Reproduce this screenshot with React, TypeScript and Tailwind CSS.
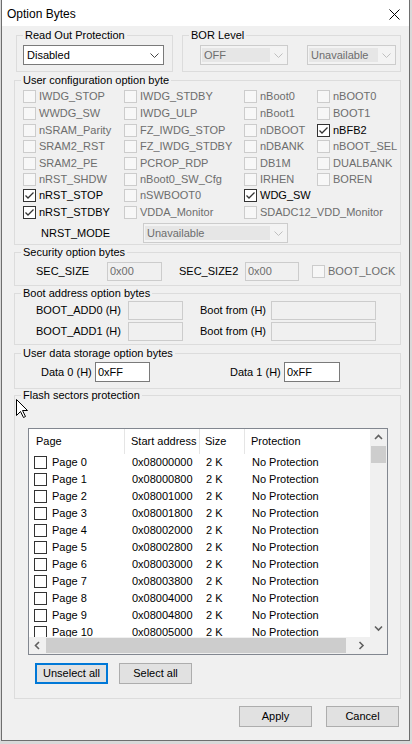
import React from "react";

type Item = { t: string; c?: boolean; e?: boolean } | null;

const Chk = ({ checked = false, disabled = false }: { checked?: boolean; disabled?: boolean }) => (
  <span
    className={`flex w-[13px] h-[13px] shrink-0 items-center justify-center border ${
      disabled ? "border-[#cccccc] bg-[#f7f7f7]" : "border-[#333333] bg-white"
    }`}
  >
    {checked && (
      <svg width="11" height="11" viewBox="0 0 11 11">
        <polyline points="1.5,5.5 4,8 9.5,2.5" fill="none" stroke="#333333" strokeWidth="1.3" />
      </svg>
    )}
  </span>
);

const Chevron = ({ color }: { color: string }) => (
  <svg width="9" height="5" viewBox="0 0 9 5">
    <polyline points="0.5,0.5 4.5,4.5 8.5,0.5" fill="none" stroke={color} strokeWidth="1" />
  </svg>
);

const ArrowIcon = ({ dir }: { dir: "up" | "down" | "left" | "right" }) => {
  const pts: Record<string, string> = {
    up: "1,6 4.5,2.5 8,6",
    down: "1,2.5 4.5,6 8,2.5",
    left: "6,1 2.5,4.5 6,8",
    right: "2.5,1 6,4.5 2.5,8",
  };
  return (
    <svg width="9" height="9" viewBox="0 0 9 9">
      <polyline points={pts[dir]} fill="none" stroke="#606060" strokeWidth="1.6" />
    </svg>
  );
};

const Group = ({
  label,
  className = "",
  children,
}: {
  label: string;
  className?: string;
  children?: React.ReactNode;
}) => (
  <div className={`flex flex-col border border-[#dcdcdc] ${className}`}>
    <span className="self-start ml-[6px] -mt-[7px] -mb-[6px] px-[2px] h-[13px] leading-[13px] bg-[#f0f0f0] whitespace-nowrap">
      {label}
    </span>
    {children}
  </div>
);

const DisabledSelect = ({ value, className }: { value: string; className: string }) => (
  <div className={`flex h-[20px] border border-[#cccccc] bg-[#f3f3f3] ${className}`}>
    <div className="flex-1 my-[2px] ml-[1px] bg-[#e6e6e6] flex items-center pl-[2px] text-[#6d6d6d]">{value}</div>
    <div className="w-[17px] flex items-center justify-center">
      <Chevron color="#bfbfbf" />
    </div>
  </div>
);

const DisabledInput = ({ value = "", className }: { value?: string; className: string }) => (
  <div className={`h-[19px] border border-[#cccccc] bg-[#f0f0f0] flex items-center pl-[2px] text-[#6d6d6d] ${className}`}>
    {value}
  </div>
);

const WhiteInput = ({ value, className }: { value: string; className: string }) => (
  <div className={`h-[20px] border border-[#7a7a7a] bg-white flex items-center pl-[2px] ${className}`}>{value}</div>
);

const Btn = ({ label, focus = false, className = "" }: { label: string; focus?: boolean; className?: string }) => (
  <div
    className={`w-[73px] h-[21px] flex items-center justify-center bg-[#e1e1e1] ${
      focus ? "border-2 border-[#0078d7]" : "border border-[#adadad]"
    } ${className}`}
  >
    {label}
  </div>
);

const rows: { h: string; items: Item[] }[] = [
  { h: "h-[17px]", items: [{ t: "IWDG_STOP" }, { t: "IWDG_STDBY" }, { t: "nBoot0" }, { t: "nBOOT0" }] },
  { h: "h-[17px]", items: [{ t: "WWDG_SW" }, { t: "IWDG_ULP" }, { t: "nBoot1" }, { t: "BOOT1" }] },
  { h: "h-[16px]", items: [{ t: "nSRAM_Parity" }, { t: "FZ_IWDG_STOP" }, { t: "nDBOOT" }, { t: "nBFB2", c: true, e: true }] },
  { h: "h-[17px]", items: [{ t: "SRAM2_RST" }, { t: "FZ_IWDG_STDBY" }, { t: "nDBANK" }, { t: "nBOOT_SEL" }] },
  { h: "h-[16px]", items: [{ t: "SRAM2_PE" }, { t: "PCROP_RDP" }, { t: "DB1M" }, { t: "DUALBANK" }] },
  { h: "h-[16px]", items: [{ t: "nRST_SHDW" }, { t: "nBoot0_SW_Cfg" }, { t: "IRHEN" }, { t: "BOREN" }] },
  { h: "h-[17px]", items: [{ t: "nRST_STOP", c: true, e: true }, { t: "nSWBOOT0" }, { t: "WDG_SW", c: true, e: true }, null] },
  { h: "h-[17px]", items: [{ t: "nRST_STDBY", c: true, e: true }, { t: "VDDA_Monitor" }, { t: "SDADC12_VDD_Monitor" }, null] },
];

const colW = ["w-[101px]", "w-[120px]", "w-[73px]", "flex-1"];

const CheckItem = ({ item }: { item: Item }) => {
  if (!item) return null;
  return (
    <div className="flex items-center gap-[3px] whitespace-nowrap">
      <Chk checked={item.c} disabled={!item.e} />
      <span className={item.e ? "text-black" : "text-[#6d6d6d]"}>{item.t}</span>
    </div>
  );
};

const pages = Array.from({ length: 11 }, (_, i) => ({
  name: `Page ${i}`,
  addr: "0x" + (0x08000000 + i * 0x800).toString(16).toUpperCase().padStart(8, "0"),
}));

export default function App() {
  return (
    <div className="relative w-[412px] h-[744px] overflow-hidden bg-[#d9d9d9] font-['Liberation_Sans',Arial,sans-serif] text-[11px] leading-[13px] text-black">
      <div className="ml-[1px] w-[409px] h-[741px] flex flex-col bg-[#f0f0f0] border-x border-b border-[#6e6e6e]">
        {/* Title bar */}
        <div className="h-[26px] shrink-0 bg-white flex items-center pt-[2px]">
          <span className="ml-[5px] text-[12px] leading-[15px]">Option Bytes</span>
          <div className="ml-auto mr-[9px] flex items-center">
            <svg width="11" height="11" viewBox="0 0 11 11">
              <path d="M0.5 0.5 L10.5 10.5 M10.5 0.5 L0.5 10.5" stroke="#000" strokeWidth="1" fill="none" />
            </svg>
          </div>
        </div>

        {/* Row: Read out / BOR */}
        <div className="flex mt-[9px] ml-[14px] gap-[9px]">
          <Group label="Read Out Protection" className="w-[157px] h-[37px]">
            <div className="mt-[9px] ml-[6px] w-[141px] h-[20px] border border-[#7a7a7a] bg-white flex">
              <div className="flex-1 flex items-center pl-[3px]">Disabled</div>
              <div className="w-[17px] flex items-center justify-center">
                <Chevron color="#444444" />
              </div>
            </div>
          </Group>
          <Group label="BOR Level" className="w-[219px] h-[37px]">
            <div className="mt-[9px] flex">
              <DisabledSelect value="OFF" className="ml-[17px] w-[88px]" />
              <DisabledSelect value="Unavailable" className="ml-[19px] w-[89px]" />
            </div>
          </Group>
        </div>

        {/* User configuration */}
        <Group label="User configuration option byte" className="ml-[12px] mt-[8px] w-[387px] h-[165px]">
          <div className="mt-[7px] pl-[8px] flex flex-col">
            {rows.map((r, ri) => (
              <div key={ri} className={`flex items-center ${r.h}`}>
                {r.items.map((it, ci) => (
                  <div key={ci} className={colW[ci]}>
                    <CheckItem item={it} />
                  </div>
                ))}
              </div>
            ))}
          </div>
          <div className="flex items-center mt-[2px] h-[20px]">
            <span className="ml-[26px] w-[102px]">NRST_MODE</span>
            <DisabledSelect value="Unavailable" className="w-[145px]" />
          </div>
        </Group>

        {/* Security */}
        <Group label="Security option bytes" className="ml-[12px] mt-[7px] w-[387px] h-[34px]">
          <div className="mt-[9px] h-[19px] flex items-center">
            <span className="ml-[21px] w-[71px]">SEC_SIZE</span>
            <DisabledInput value="0x00" className="w-[55px]" />
            <span className="ml-[17px] w-[66px]">SEC_SIZE2</span>
            <DisabledInput value="0x00" className="w-[54px]" />
            <div className="ml-[13px] flex items-center gap-[3px]">
              <Chk disabled />
              <span className="text-[#6d6d6d]">BOOT_LOCK</span>
            </div>
          </div>
        </Group>

        {/* Boot address */}
        <Group label="Boot address option bytes" className="ml-[12px] mt-[7px] w-[387px] h-[52px]">
          <div className="mt-[7px] h-[19px] flex items-center">
            <span className="ml-[21px] w-[92px]">BOOT_ADD0 (H)</span>
            <DisabledInput className="w-[55px]" />
            <span className="ml-[17px] w-[71px]">Boot from (H)</span>
            <DisabledInput className="w-[105px]" />
          </div>
          <div className="mt-[2px] h-[19px] flex items-center">
            <span className="ml-[21px] w-[92px]">BOOT_ADD1 (H)</span>
            <DisabledInput className="w-[55px]" />
            <span className="ml-[17px] w-[71px]">Boot from (H)</span>
            <DisabledInput className="w-[105px]" />
          </div>
        </Group>

        {/* User data */}
        <Group label="User data storage option bytes" className="ml-[12px] mt-[8px] w-[387px] h-[36px]">
          <div className="mt-[8px] h-[20px] flex items-center">
            <span className="ml-[26px] w-[54px]">Data 0 (H)</span>
            <WhiteInput value="0xFF" className="w-[55px]" />
            <span className="ml-[80px] w-[54px]">Data 1 (H)</span>
            <WhiteInput value="0xFF" className="w-[56px]" />
          </div>
        </Group>

        {/* Flash sectors */}
        <Group label="Flash sectors protection" className="ml-[12px] mt-[6px] w-[387px] h-[304px]">
          <div className="mt-[32px] ml-[13px] w-[360px] h-[227px] border border-[#828790] bg-white flex flex-col">
            <div className="h-[208px] flex">
              <div className="w-[341px] flex flex-col overflow-hidden">
                <div className="h-[25px] shrink-0 flex">
                  <div className="w-[96px] pl-[7px] flex items-center border-r border-[#e5e5e5]">Page</div>
                  <div className="w-[75px] pl-[6px] flex items-center border-r border-[#e5e5e5] whitespace-nowrap">
                    Start address
                  </div>
                  <div className="w-[45px] pl-[5px] flex items-center border-r border-[#e5e5e5]">Size</div>
                  <div className="flex-1 pl-[6px] flex items-center">Protection</div>
                </div>
                <div className="flex-1 overflow-hidden">
                  {pages.map((p) => (
                    <div key={p.name} className="h-[17px] flex items-center whitespace-nowrap">
                      <div className="w-[96px] pl-[5px] flex items-center gap-[5px]">
                        <Chk />
                        <span>{p.name}</span>
                      </div>
                      <div className="w-[75px] pl-[7px]">{p.addr.replace("0X", "0x")}</div>
                      <div className="w-[45px] pl-[6px]">2 K</div>
                      <div className="flex-1 pl-[7px]">No Protection</div>
                    </div>
                  ))}
                </div>
              </div>
              <div className="w-[17px] bg-[#f0f0f0] flex flex-col">
                <div className="h-[17px] flex items-center justify-center">
                  <ArrowIcon dir="up" />
                </div>
                <div className="h-[17px] mx-[1px] bg-[#cdcdcd]" />
                <div className="flex-1" />
                <div className="h-[17px] flex items-center justify-center">
                  <ArrowIcon dir="down" />
                </div>
              </div>
            </div>
            <div className="h-[17px] flex">
              <div className="w-[341px] bg-[#f0f0f0] flex">
                <div className="w-[17px] flex items-center justify-center">
                  <ArrowIcon dir="left" />
                </div>
                <div className="w-[300px] my-[1px] bg-[#cdcdcd]" />
                <div className="flex-1" />
                <div className="w-[17px] flex items-center justify-center">
                  <ArrowIcon dir="right" />
                </div>
              </div>
              <div className="w-[17px] bg-[#f0f0f0]" />
            </div>
          </div>
          <div className="mt-[8px] ml-[20px] flex gap-[11px]">
            <Btn label="Unselect all" focus />
            <Btn label="Select all" />
          </div>
        </Group>

        {/* Bottom buttons */}
        <div className="mt-[7px] flex justify-end pr-[10px] gap-[14px]">
          <Btn label="Apply" />
          <Btn label="Cancel" />
        </div>
      </div>

      {/* Mouse cursor overlay */}
      <svg className="absolute left-[16px] top-[399px]" width="13" height="20" viewBox="0 0 13 20">
        <path d="M0.5 0.5 L0.5 16.5 L4.5 12.5 L7.5 18.5 L9.5 17.5 L6.5 11.5 L11.5 11.5 Z" fill="#ffffff" stroke="#000000" strokeWidth="1" />
      </svg>
    </div>
  );
}
